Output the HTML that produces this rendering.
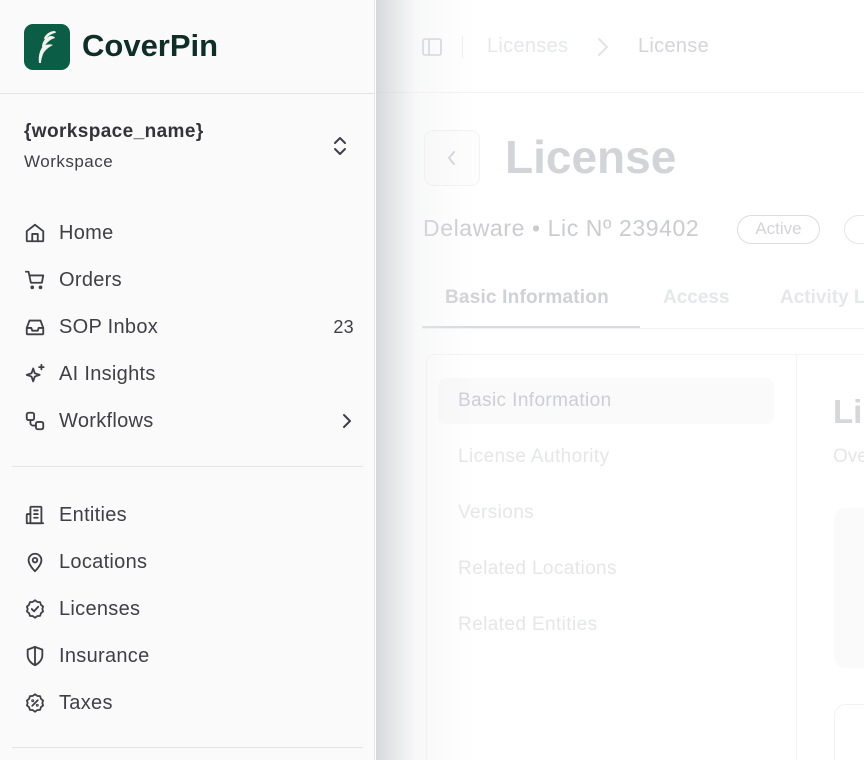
<!DOCTYPE html>
<html><head><meta charset="utf-8"><style>
*{box-sizing:border-box;margin:0;padding:0}
html,body{width:864px;height:760px;overflow:hidden}
body{font-family:"Liberation Sans",sans-serif;background:#fff;position:relative;white-space:nowrap}
.sb{position:absolute;left:0;top:0;width:375px;height:760px;background:#fafafa;border-right:1px solid #e8e8ea}
.logo{position:absolute;left:24px;top:24px;width:46px;height:46px;border-radius:9px;background:#0b5e45}
.brand{position:absolute;left:82px;top:28px;font-size:31px;font-weight:bold;color:#0f2e26;letter-spacing:0px}
.hr{position:absolute;height:1px;background:#e4e4e7}
.ws{position:absolute;left:24px;top:121px;font-size:19px;font-weight:bold;color:#333338;letter-spacing:.4px}
.ws2{position:absolute;left:24px;top:152px;font-size:17px;color:#3f3f46;letter-spacing:.5px}
.it{position:absolute;left:24px;height:24px;width:330px;font-size:20px;color:#3f3f46;display:flex;align-items:center;letter-spacing:.3px}
.it svg{width:22px;height:22px;margin-right:13px;fill:none;stroke:#3f3f46;stroke-width:2;stroke-linecap:round;stroke-linejoin:round;flex:none}
.it .r{margin-left:auto;font-size:18px}
.main{position:absolute;left:376px;top:0;width:488px;height:760px;overflow:hidden;color:#d2d3d7}
.shadow{position:absolute;left:376px;top:0;width:100px;height:760px;background:linear-gradient(90deg,rgba(200,203,208,.75),rgba(235,236,238,.35) 40%,rgba(255,255,255,0))}
</style></head><body>
<div class="main">
<svg style="position:absolute;left:46px;top:37px" width="20" height="20" viewBox="0 0 20 20" fill="none" stroke="#cfd0d4" stroke-width="1.6"><rect x="1" y="2" width="18" height="16" rx="2"/><line x1="7" y1="2" x2="7" y2="18"/></svg>
<div style="position:absolute;left:86px;top:36px;width:1px;height:22px;background:#eee"></div>
<div style="position:absolute;left:111px;top:35px;font-size:20px;color:#e6e7e9;letter-spacing:.3px">Licenses</div>
<svg style="position:absolute;left:220px;top:37px" width="14" height="20" viewBox="0 0 14 20" fill="none" stroke="#e2e3e5" stroke-width="2" stroke-linecap="round" stroke-linejoin="round"><path d="M3 2l8 8-8 8"/></svg>
<div style="position:absolute;left:262px;top:35px;font-size:20px;color:#d4d5d9;letter-spacing:.3px">License</div>
<div style="position:absolute;left:0;right:0;top:92px;height:1px;background:#f3f3f4"></div>
<div style="position:absolute;left:48px;top:130px;width:56px;height:56px;border:1px solid #f2f2f3;border-radius:9px;background:#fdfdfd"></div>
<svg style="position:absolute;left:70px;top:150px" width="12" height="16" viewBox="0 0 12 16" fill="none" stroke="#cfd0d4" stroke-width="1.8" stroke-linecap="round" stroke-linejoin="round"><path d="M8 2L3 8l5 6"/></svg>
<div style="position:absolute;left:129px;top:130px;font-size:46px;font-weight:bold;color:#d3d4d8">License</div>
<div style="position:absolute;left:47px;top:215px;font-size:23px;color:#cbccd0;letter-spacing:.6px">Delaware • Lic Nº 239402</div>
<div style="position:absolute;left:361px;top:215px;width:83px;height:29px;border:1.5px solid #dcdde0;border-radius:15px;font-size:17px;color:#d3d4d8;text-align:center;line-height:26px">Active</div>
<div style="position:absolute;left:468px;top:215px;width:40px;height:29px;border:1.5px solid #e6e6e8;border-radius:15px"></div>
<div style="position:absolute;left:69px;top:287px;font-size:19px;font-weight:bold;color:#d0d1d5;letter-spacing:.2px">Basic Information</div>
<div style="position:absolute;left:287px;top:287px;font-size:19px;font-weight:bold;color:#e6e7e9">Access</div>
<div style="position:absolute;left:404px;top:287px;font-size:19px;font-weight:bold;color:#e6e7e9">Activity L</div>
<div style="position:absolute;left:46px;right:0;top:328px;height:1px;background:#f3f3f4"></div>
<div style="position:absolute;left:46px;width:218px;top:326px;height:2px;background:#d9dadd"></div>
<div style="position:absolute;left:50px;width:460px;top:354px;height:420px;border:1px solid #f4f4f5;border-radius:8px"></div>
<div style="position:absolute;left:420px;top:354px;width:1px;height:406px;background:#f3f3f4"></div>
<div style="position:absolute;left:62px;top:378px;width:336px;height:46px;background:#fafafa;border-radius:8px"></div>
<div style="position:absolute;left:82px;top:390px;font-size:19px;color:#cdced2;letter-spacing:.4px">Basic Information</div>
<div style="position:absolute;left:82px;top:446px;font-size:19px;color:#e5e6e8;letter-spacing:.4px">License Authority</div>
<div style="position:absolute;left:82px;top:502px;font-size:19px;color:#e5e6e8;letter-spacing:.4px">Versions</div>
<div style="position:absolute;left:82px;top:558px;font-size:19px;color:#e5e6e8;letter-spacing:.4px">Related Locations</div>
<div style="position:absolute;left:82px;top:614px;font-size:19px;color:#e5e6e8;letter-spacing:.4px">Related Entities</div>
<div style="position:absolute;left:457px;top:393px;font-size:33px;font-weight:bold;color:#d6d7da">Li</div>
<div style="position:absolute;left:457px;top:446px;font-size:19px;color:#e5e6e8">Ove</div>
<div style="position:absolute;left:458px;top:508px;width:60px;height:160px;background:#fafafa;border-radius:12px"></div>
<div style="position:absolute;left:458px;top:704px;width:60px;height:80px;border:1px solid #f1f1f2;border-radius:12px"></div>
</div>
<div class="shadow"></div>
<div class="sb">
<div class="logo"><svg width="46" height="46" viewBox="0 0 46 46"><g fill="#f1f1ee"><path d="M15 39 C14 32 16 26 19 22 C23 20 27 20 29 21 C25 23 21 26 19 30 C18 33 17 36 17 39Z"/><path d="M18 23 C18 18 21 14 26 12 C29 12 31 13 31 14 C27 15 23 18 20 23Z"/><path d="M20 14 C22 10 26 7 31 7 C32 8 32 9 31 9 C27 10 24 12 21 16Z"/></g></svg></div>
<div class="brand">CoverPin</div>
<div class="hr" style="left:0;width:375px;top:93px"></div>
<div class="ws">{workspace_name}</div>
<div class="ws2">Workspace</div>
<svg style="position:absolute;left:332px;top:136px" width="16" height="20" viewBox="0 0 16 20" fill="none" stroke="#3f3f46" stroke-width="2" stroke-linecap="round" stroke-linejoin="round"><path d="M3 7l5-5 5 5M3 13l5 5 5-5"/></svg>
<div class="it" style="top:221px"><svg viewBox="0 0 24 24"><path d="M3 10l9-7 9 7v10a1 1 0 0 1-1 1H4a1 1 0 0 1-1-1z"/><path d="M9 21v-8h6v8"/></svg>Home</div>
<div class="it" style="top:268px"><svg viewBox="0 0 24 24"><path d="M2 3h3l2.5 12h12L21 7H6"/><circle cx="9" cy="20" r="1"/><circle cx="18" cy="20" r="1"/></svg>Orders</div>
<div class="it" style="top:315px"><svg viewBox="0 0 24 24"><path d="M3 13l3-8h12l3 8v6a1 1 0 0 1-1 1H4a1 1 0 0 1-1-1z"/><path d="M3 13h5l1 3h6l1-3h5"/></svg>SOP Inbox<span class="r">23</span></div>
<div class="it" style="top:362px"><svg viewBox="0 0 24 24"><path d="M10 6l1.8 5.2L17 13l-5.2 1.8L10 20l-1.8-5.2L3 13l5.2-1.8z"/><path d="M19 2v5M16.5 4.5h5"/></svg>AI Insights</div>
<div class="it" style="top:409px"><svg viewBox="0 0 24 24"><rect x="3" y="3" width="8" height="8" rx="2"/><rect x="13" y="13" width="8" height="8" rx="2"/><path d="M7 11v3a3 3 0 0 0 3 3h3"/></svg>Workflows<svg style="margin-left:auto;margin-right:0;width:14px;height:18px" viewBox="0 0 14 18"><path d="M4 3l6 6-6 6"/></svg></div>
<div class="hr" style="left:12px;width:351px;top:466px"></div>
<div class="it" style="top:503px"><svg viewBox="0 0 24 24"><path d="M7 21V4a1 1 0 0 1 1-1h10a1 1 0 0 1 1 1v17z"/><path d="M7 11H4a1 1 0 0 0-1 1v8a1 1 0 0 0 1 1h3M11 7h4M11 11h4M11 15h4M3 21h18"/></svg>Entities</div>
<div class="it" style="top:550px"><svg viewBox="0 0 24 24"><path d="M12 22s7-6.5 7-12a7 7 0 0 0-14 0c0 5.5 7 12 7 12z"/><circle cx="12" cy="10" r="2.5"/></svg>Locations</div>
<div class="it" style="top:597px"><svg viewBox="0 0 24 24"><path d="M12 2.5l2.5 1.8 3 .2 1 2.9 2.3 2L20 12l.8 2.6-2.3 2-1 2.9-3 .2L12 21.5l-2.5-1.8-3-.2-1-2.9-2.3-2L4 12l-.8-2.6 2.3-2 1-2.9 3-.2z"/><path d="M8.5 12l2.5 2.5 4.5-5"/></svg>Licenses</div>
<div class="it" style="top:644px"><svg viewBox="0 0 24 24"><path d="M12 2l8 3v6c0 5-3.5 9-8 11-4.5-2-8-6-8-11V5z"/><path d="M12 2v20"/></svg>Insurance</div>
<div class="it" style="top:691px"><svg viewBox="0 0 24 24"><path d="M12 2.5l2.5 1.8 3 .2 1 2.9 2.3 2L20 12l.8 2.6-2.3 2-1 2.9-3 .2L12 21.5l-2.5-1.8-3-.2-1-2.9-2.3-2L4 12l-.8-2.6 2.3-2 1-2.9 3-.2z"/><path d="M9 15l6-6"/><circle cx="9.5" cy="9.5" r=".6"/><circle cx="14.5" cy="14.5" r=".6"/></svg>Taxes</div>
<div class="hr" style="left:12px;width:351px;top:747px"></div>
</div>
</body></html>
